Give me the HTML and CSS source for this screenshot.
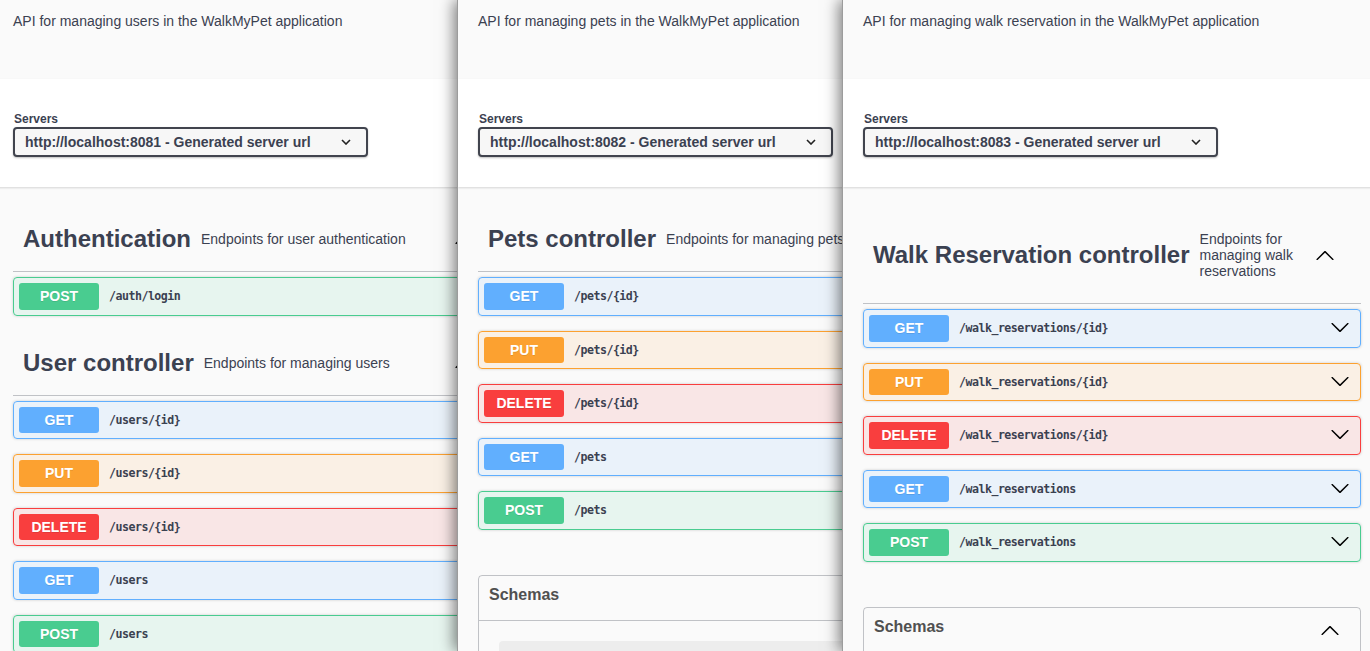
FILE: index.html
```html
<!DOCTYPE html>
<html lang="en">
<head>
<meta charset="utf-8">
<title>WalkMyPet APIs</title>
<link rel="stylesheet" href="styles.css">
</head>
<body>
<div class="desk">

  <!-- Window 1: users -->
  <section class="win w1">
    <div class="info"><p>API for managing users in the WalkMyPet application</p></div>
    <div class="scheme">
      <label class="servers-label">Servers</label>
      <div class="select"><span>http://localhost:8081 - Generated server url</span>
        <svg class="sel-arrow" viewBox="0 0 10 6" width="10" height="6"><path d="M1 1l4 4 4-4" fill="none" stroke="#222" stroke-width="1.6"/></svg>
      </div>
    </div>
    <div class="wrapper">
      <div class="tag">
        <span class="tag-title">Authentication</span>
        <div class="tag-desc"><p>Endpoints for user authentication</p></div>
        <button class="tag-btn"><svg width="20" height="20" viewBox="0 0 20 20"><path d="M17.418 14.908c.272.268.709.268.979 0s.271-.701 0-.969l-7.908-7.83c-.27-.268-.707-.268-.979 0l-7.908 7.83c-.27.268-.27.701 0 .969.271.268.709.268.979 0L10 7.75l7.418 7.158z"/></svg></button>
      </div>
      <div class="op post"><span class="method">POST</span><span class="path">/auth/login</span><span class="op-arrow"><svg width="20" height="20" viewBox="0 0 20 20"><path d="M17.418 6.109c.272-.268.709-.268.979 0s.271.701 0 .969l-7.908 7.83c-.27.268-.707.268-.979 0l-7.908-7.830c-.27-.268-.27-.701 0-.969.271-.268.709-.268.979 0L10 13.25l7.418-7.141z"/></svg></span></div>

      <div class="tag">
        <span class="tag-title">User controller</span>
        <div class="tag-desc"><p>Endpoints for managing users</p></div>
        <button class="tag-btn"><svg width="20" height="20" viewBox="0 0 20 20"><path d="M17.418 14.908c.272.268.709.268.979 0s.271-.701 0-.969l-7.908-7.83c-.27-.268-.707-.268-.979 0l-7.908 7.83c-.27.268-.27.701 0 .969.271.268.709.268.979 0L10 7.75l7.418 7.158z"/></svg></button>
      </div>
      <div class="op get"><span class="method">GET</span><span class="path">/users/{id}</span></div>
      <div class="op put"><span class="method">PUT</span><span class="path">/users/{id}</span></div>
      <div class="op delete"><span class="method">DELETE</span><span class="path">/users/{id}</span></div>
      <div class="op get"><span class="method">GET</span><span class="path">/users</span></div>
      <div class="op post"><span class="method">POST</span><span class="path">/users</span></div>
    </div>
  </section>

  <!-- Window 2: pets -->
  <section class="win w2">
    <div class="info"><p>API for managing pets in the WalkMyPet application</p></div>
    <div class="scheme">
      <label class="servers-label">Servers</label>
      <div class="select"><span>http://localhost:8082 - Generated server url</span>
        <svg class="sel-arrow" viewBox="0 0 10 6" width="10" height="6"><path d="M1 1l4 4 4-4" fill="none" stroke="#222" stroke-width="1.6"/></svg>
      </div>
    </div>
    <div class="wrapper">
      <div class="tag">
        <span class="tag-title">Pets controller</span>
        <div class="tag-desc"><p>Endpoints for managing pets</p></div>
        <button class="tag-btn"><svg width="20" height="20" viewBox="0 0 20 20"><path d="M17.418 14.908c.272.268.709.268.979 0s.271-.701 0-.969l-7.908-7.83c-.27-.268-.707-.268-.979 0l-7.908 7.83c-.27.268-.27.701 0 .969.271.268.709.268.979 0L10 7.75l7.418 7.158z"/></svg></button>
      </div>
      <div class="op get"><span class="method">GET</span><span class="path">/pets/{id}</span></div>
      <div class="op put"><span class="method">PUT</span><span class="path">/pets/{id}</span></div>
      <div class="op delete"><span class="method">DELETE</span><span class="path">/pets/{id}</span></div>
      <div class="op get"><span class="method">GET</span><span class="path">/pets</span></div>
      <div class="op post"><span class="method">POST</span><span class="path">/pets</span></div>

      <div class="models">
        <h4><span>Schemas</span><svg width="20" height="20" viewBox="0 0 20 20"><path d="M17.418 14.908c.272.268.709.268.979 0s.271-.701 0-.969l-7.908-7.83c-.27-.268-.707-.268-.979 0l-7.908 7.83c-.27.268-.27.701 0 .969.271.268.709.268.979 0L10 7.75l7.418 7.158z"/></svg></h4>
        <div class="model-box"></div>
      </div>
    </div>
  </section>

  <!-- Window 3: walk reservations -->
  <section class="win w3">
    <div class="info"><p>API for managing walk reservation in the WalkMyPet application</p></div>
    <div class="scheme">
      <label class="servers-label">Servers</label>
      <div class="select"><span>http://localhost:8083 - Generated server url</span>
        <svg class="sel-arrow" viewBox="0 0 10 6" width="10" height="6"><path d="M1 1l4 4 4-4" fill="none" stroke="#222" stroke-width="1.6"/></svg>
      </div>
    </div>
    <div class="wrapper">
      <div class="tag">
        <span class="tag-title">Walk Reservation controller</span>
        <div class="tag-desc"><p>Endpoints for managing walk reservations</p></div>
        <button class="tag-btn"><svg width="20" height="20" viewBox="0 0 20 20"><path d="M17.418 14.908c.272.268.709.268.979 0s.271-.701 0-.969l-7.908-7.83c-.27-.268-.707-.268-.979 0l-7.908 7.83c-.27.268-.27.701 0 .969.271.268.709.268.979 0L10 7.75l7.418 7.158z"/></svg></button>
      </div>
      <div class="op get"><span class="method">GET</span><span class="path">/walk_reservations/{id}</span><span class="op-arrow"><svg width="20" height="20" viewBox="0 0 20 20"><path d="M17.418 6.109c.272-.268.709-.268.979 0s.271.701 0 .969l-7.908 7.83c-.27.268-.707.268-.979 0l-7.908-7.83c-.27-.268-.27-.701 0-.969.271-.268.709-.268.979 0L10 13.25l7.418-7.141z"/></svg></span></div>
      <div class="op put"><span class="method">PUT</span><span class="path">/walk_reservations/{id}</span><span class="op-arrow"><svg width="20" height="20" viewBox="0 0 20 20"><path d="M17.418 6.109c.272-.268.709-.268.979 0s.271.701 0 .969l-7.908 7.83c-.27.268-.707.268-.979 0l-7.908-7.83c-.27-.268-.27-.701 0-.969.271-.268.709-.268.979 0L10 13.25l7.418-7.141z"/></svg></span></div>
      <div class="op delete"><span class="method">DELETE</span><span class="path">/walk_reservations/{id}</span><span class="op-arrow"><svg width="20" height="20" viewBox="0 0 20 20"><path d="M17.418 6.109c.272-.268.709-.268.979 0s.271.701 0 .969l-7.908 7.83c-.27.268-.707.268-.979 0l-7.908-7.83c-.27-.268-.27-.701 0-.969.271-.268.709-.268.979 0L10 13.25l7.418-7.141z"/></svg></span></div>
      <div class="op get"><span class="method">GET</span><span class="path">/walk_reservations</span><span class="op-arrow"><svg width="20" height="20" viewBox="0 0 20 20"><path d="M17.418 6.109c.272-.268.709-.268.979 0s.271.701 0 .969l-7.908 7.83c-.27.268-.707.268-.979 0l-7.908-7.83c-.27-.268-.27-.701 0-.969.271-.268.709-.268.979 0L10 13.25l7.418-7.141z"/></svg></span></div>
      <div class="op post"><span class="method">POST</span><span class="path">/walk_reservations</span><span class="op-arrow"><svg width="20" height="20" viewBox="0 0 20 20"><path d="M17.418 6.109c.272-.268.709-.268.979 0s.271.701 0 .969l-7.908 7.83c-.27.268-.707.268-.979 0l-7.908-7.83c-.27-.268-.27-.701 0-.969.271-.268.709-.268.979 0L10 13.25l7.418-7.141z"/></svg></span></div>

      <div class="models">
        <h4><span>Schemas</span><svg width="20" height="20" viewBox="0 0 20 20"><path d="M17.418 14.908c.272.268.709.268.979 0s.271-.701 0-.969l-7.908-7.83c-.27-.268-.707-.268-.979 0l-7.908 7.83c-.27.268-.27.701 0 .969.271.268.709.268.979 0L10 7.75l7.418 7.158z"/></svg></h4>
        <div class="model-box"></div>
      </div>
    </div>
  </section>

</div>
</body>
</html>
```

FILE: styles.css
```css
* { box-sizing: border-box; }

html, body {
  margin: 0;
  padding: 0;
  background: #fafafa;
}

body {
  font-family: "Liberation Sans", Arial, sans-serif;
  color: #3b4151;
}

.desk {
  position: relative;
  width: 1370px;
  height: 651px;
  overflow: hidden;
  background: #fafafa;
}

/* browser windows laid on a desktop */
.win {
  position: absolute;
  top: 0;
  height: 651px;
  overflow: hidden;
  background: #fafafa;
  border-left: 1px solid #9c9c9c;
}

.w1 { left: -8px; width: 528px; z-index: 1; }
.w2 { left: 457px; width: 539px; z-index: 2; box-shadow: -3px 0 14px rgba(0, 0, 0, 0.5); }
.w3 { left: 842px; width: 539px; z-index: 3; box-shadow: -3px 0 14px rgba(0, 0, 0, 0.5); }

/* info header */
.info {
  height: 79px;
  padding: 13px 20px 0;
  background: #fafafa;
}

.info p {
  margin: 0;
  font-size: 14px;
  line-height: 16px;
  color: #3b4151;
}

/* servers */
.scheme {
  background: #fff;
  box-shadow: 0 1px 2px 0 rgba(0, 0, 0, 0.15);
  padding: 30px 20px;
  margin: 0 0 20px;
  position: relative;
}

.servers-label {
  display: block;
  font-size: 12px;
  font-weight: 700;
  line-height: 16px;
  padding: 2px 0 0 1px;
  color: #3b4151;
}

.select {
  width: 355px;
  height: 30px;
  border: 2px solid #41444e;
  border-radius: 4px;
  background: #f7f7f7;
  box-shadow: 0 1px 2px 0 rgba(0, 0, 0, 0.25);
  display: flex;
  align-items: center;
  justify-content: space-between;
  padding: 0 15px 0 10px;
  font-size: 14px;
  font-weight: 700;
  color: #3b4151;
}

.sel-arrow { display: block; }

/* content wrapper */
.wrapper {
  padding: 0 20px;
}

/* tags */
.tag {
  display: flex;
  align-items: center;
  padding: 10px 20px 10px 10px;
  border-bottom: 1px solid rgba(59, 65, 81, 0.3);
  margin: 0 0 5px;
}

.tag-title {
  font-size: 24px;
  font-weight: 700;
  white-space: nowrap;
  color: #3b4151;
}

.tag-desc {
  flex: 1;
  min-width: 0;
  padding: 0 10px;
  font-size: 14px;
  color: #3b4151;
}

.tag-desc p {
  margin: 14px 0;
  line-height: 16px;
}

.tag-btn {
  border: 0;
  background: none;
  padding: 0 6px;
  display: flex;
  align-items: center;
}

.tag-btn svg { display: block; fill: #000; }

/* operations */
.op {
  display: flex;
  align-items: center;
  border: 1px solid;
  border-radius: 4px;
  box-shadow: 0 0 3px rgba(0, 0, 0, 0.19);
  margin: 0 0 15px;
  padding: 5px;
}

.method {
  flex: none;
  width: 80px;
  padding: 6px 0;
  font-size: 14px;
  line-height: 14.5px;
  font-weight: 700;
  color: #fff;
  text-align: center;
  border-radius: 3px;
  text-shadow: 0 1px 0 rgba(0, 0, 0, 0.1);
}

.path {
  flex: 1;
  padding: 0 10px;
  font-family: "DejaVu Sans Mono", "Liberation Mono", monospace;
  font-size: 11.6px;
  letter-spacing: -0.5px;
  font-weight: 700;
  color: #3b4151;
  white-space: nowrap;
}

.op-arrow {
  display: flex;
  padding: 0 5px 2px 10px;
}

.op-arrow svg { display: block; fill: #000; }

.get { background: rgba(97, 175, 254, 0.1); border-color: #61affe; }
.get .method { background: #61affe; }
.post { background: rgba(73, 204, 144, 0.1); border-color: #49cc90; }
.post .method { background: #49cc90; }
.put { background: rgba(252, 161, 48, 0.1); border-color: #fca130; }
.put .method { background: #fca130; }
.delete { background: rgba(249, 62, 62, 0.1); border-color: #f93e3e; }
.delete .method { background: #f93e3e; }

/* schemas */
.models {
  margin-top: 45px;
  border: 1px solid rgba(59, 65, 81, 0.3);
  border-radius: 4px;
}

.models h4 {
  display: flex;
  align-items: flex-start;
  justify-content: space-between;
  height: 45.7px;
  margin: 0;
  padding: 10px 20px 10px 10px;
  font-size: 16px;
  font-weight: 700;
  color: #505050;
  border-bottom: 1px solid rgba(59, 65, 81, 0.3);
}

.models h4 svg {
  display: block;
  fill: #000;
  margin-top: 2px;
}

.model-box {
  margin: 20px 20px 15px;
  height: 60px;
  border-radius: 4px;
  background: rgba(0, 0, 0, 0.05);
}
```
